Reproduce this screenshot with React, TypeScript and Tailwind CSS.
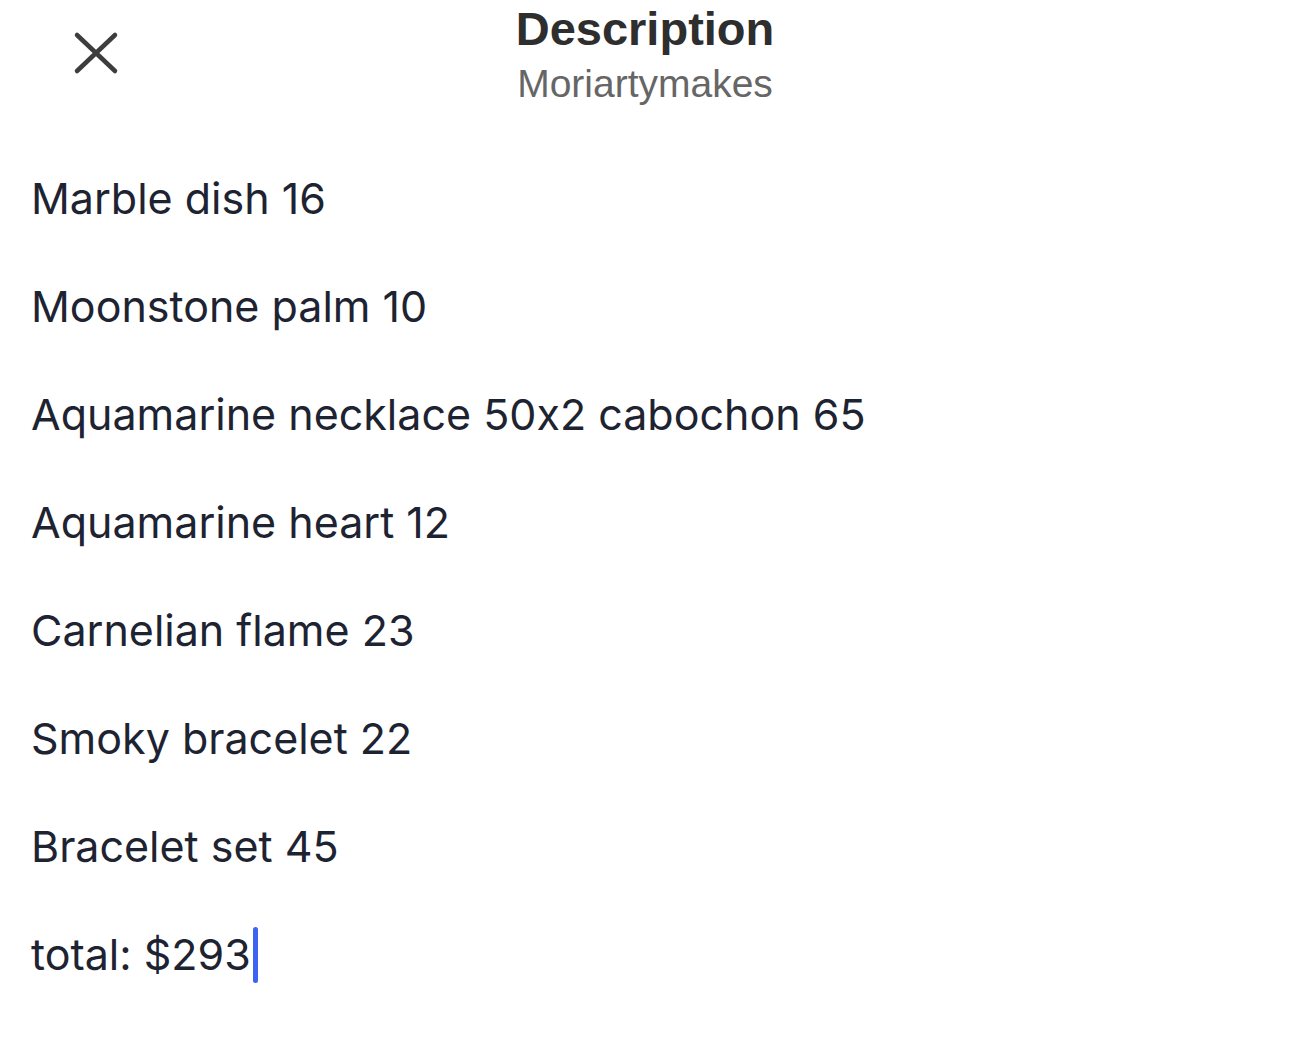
import React from "react";

const items = [
  "Marble dish 16",
  "Moonstone palm 10",
  "Aquamarine necklace 50x2 cabochon 65",
  "Aquamarine heart 12",
  "Carnelian flame 23",
  "Smoky bracelet 22",
  "Bracelet set 45",
];

export default function App() {
  return (
    <div className="w-[1290px] h-[1042px] bg-white overflow-hidden relative">
      <header className="relative h-[120px]">
        <button className="absolute left-[73px] top-[31px] w-[46px] h-[44px] flex items-center justify-center">
          <svg width="46" height="44" viewBox="0 0 46 44">
            <path d="M4 4 L42 40 M42 4 L4 40" stroke="#3d3d3d" strokeWidth="4.5" strokeLinecap="round" fill="none" />
          </svg>
        </button>
        <div className="flex flex-col items-center pt-[1px]" style={{ fontFamily: '"Liberation Sans", Arial, sans-serif' }}>
          <div className="text-[47px] font-bold text-[#2e2e2e] leading-[56px]">Description</div>
          <div className="text-[39px] text-[#666666] leading-[52px] mt-[1px]">Moriartymakes</div>
        </div>
      </header>
      <div
        className="flex flex-col pl-[31px] pt-[24px] text-[43px] text-[#1e2332] leading-[108px] [font-feature-settings:'calt'_0]"
        style={{ fontFamily: 'Inter, "Noto Sans", sans-serif' }}
      >
        {items.map((t) => (
          <div key={t}>{t}</div>
        ))}
        <div className="flex items-center">
          <span>total: $293</span>
          <span className="inline-block w-[5px] h-[56px] bg-[#3d63f2] rounded-full ml-[2px] mt-[2px]"></span>
        </div>
      </div>
    </div>
  );
}
